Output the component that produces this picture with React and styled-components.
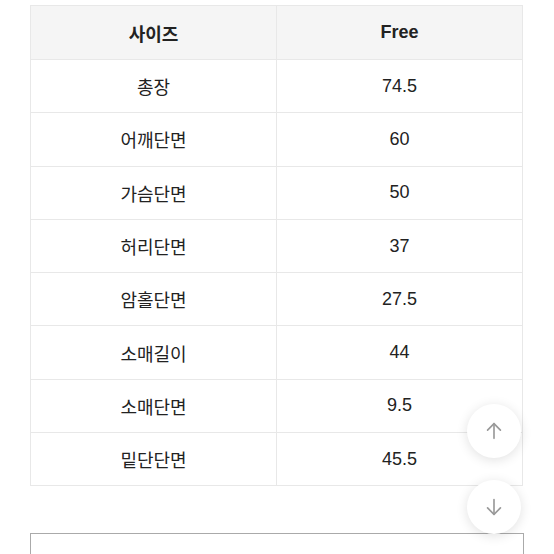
import React from 'react';
import styled, { createGlobalStyle } from 'styled-components';

const Global = createGlobalStyle`
  html, body {
    margin: 0;
    padding: 0;
    background: #fff;
    overflow: hidden;
  }
  body {
    font-family: "Liberation Sans", "Noto Sans CJK KR", sans-serif;
    color: #222;
  }
`;

const Page = styled.div`
  width: 554px;
  height: 554px;
  padding: 5px 31px 0 30px;
  box-sizing: border-box;
  position: relative;
  overflow: hidden;
`;

const Table = styled.table`
  width: 493px;
  border-collapse: collapse;
  table-layout: fixed;
  border: 1px solid #ececec;
`;

const Cell = styled.td`
  height: ${props => props.head ? '53px' : '52.3px'};
  text-align: center;
  vertical-align: middle;
  font-size: 18px;
  font-weight: ${props => props.head ? 600 : 400};
  background: ${props => props.head ? '#f5f5f5' : '#fff'};
  border: 1px solid #e8e8e8;
  padding: 0;
  color: #222;
`;

const Box = styled.div`
  margin-top: 47px;
  width: 494px;
  height: 40px;
  border: 1px solid #aaa;
  box-sizing: border-box;
`;

const Float = styled.button`
  position: absolute;
  left: 467px;
  top: ${props => props.top}px;
  width: 54px;
  height: 54px;
  border-radius: 50%;
  border: none;
  background: #fff;
  box-shadow: 0 2px 12px rgba(0, 0, 0, 0.12);
  display: flex;
  align-items: center;
  justify-content: center;
  padding: 0;
`;

const rows = [
  ['총장', '74.5'],
  ['어깨단면', '60'],
  ['가슴단면', '50'],
  ['허리단면', '37'],
  ['암홀단면', '27.5'],
  ['소매길이', '44'],
  ['소매단면', '9.5'],
  ['밑단단면', '45.5'],
];

const Arrow = ({ down }) => (
  <svg width="22" height="22" viewBox="0 0 24 24" fill="none" stroke="#999" strokeWidth="1.8" strokeLinecap="round" strokeLinejoin="round" style={{ transform: down ? 'rotate(180deg)' : 'none' }}>
    <path d="M12 20V4" />
    <path d="M5 11l7-7 7 7" />
  </svg>
);

export default function App() {
  return (
    <Page>
      <Global />
      <Table>
        <tbody>
          <tr>
            <Cell head>사이즈</Cell>
            <Cell head>Free</Cell>
          </tr>
          {rows.map(([k, v]) => (
            <tr key={k}>
              <Cell>{k}</Cell>
              <Cell>{v}</Cell>
            </tr>
          ))}
        </tbody>
      </Table>
      <Box />
      <Float top={404}><Arrow /></Float>
      <Float top={480}><Arrow down /></Float>
    </Page>
  );
}
